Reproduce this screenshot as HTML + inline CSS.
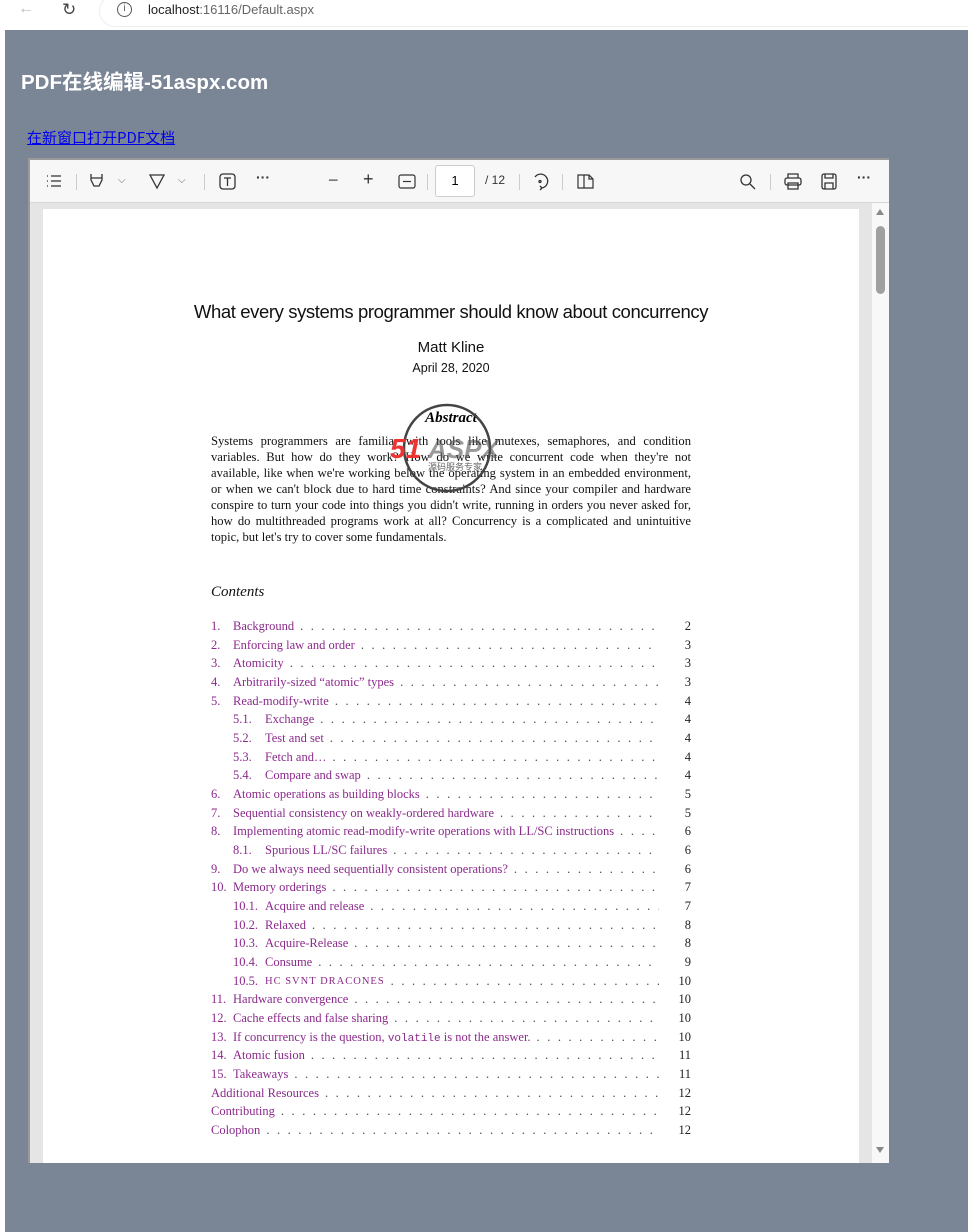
<!DOCTYPE html>
<html><head><meta charset="utf-8"><style>
*{margin:0;padding:0;box-sizing:border-box}
body{width:968px;height:1232px;background:#fff;position:relative;overflow:hidden;font-family:"Liberation Sans","Noto Sans CJK SC",sans-serif}
.top{position:absolute;left:0;top:0;width:968px;height:30px;background:#fff}
.url{position:absolute;left:100px;top:-4px;width:880px;height:30px;background:#fff;border-radius:15px;box-shadow:0 0 0 1px #eee}
.main{position:absolute;left:5px;top:30px;width:963px;height:1202px;background:#7a8596}
h1{position:absolute;left:21px;top:65px;color:#fff;font-size:20.5px;font-weight:bold;font-family:"Liberation Sans","Noto Sans CJK SC",sans-serif}
a.lk{position:absolute;left:27px;top:127px;color:#00e;font-size:15px;text-decoration:underline;font-family:"Noto Sans CJK SC",sans-serif}
.viewer{position:absolute;left:28px;top:158px;width:861px;height:1005px;background:#e5e5e5;border:2px solid #9a9a9a;border-bottom:none;border-right:none;overflow:hidden}
.tb{position:absolute;left:0;top:0;width:859px;height:43px;background:#f7f7f7;border-bottom:1px solid #d6d6d6}
.page{position:absolute;left:13px;top:49px;width:816px;height:960px;background:#fff}
.sb{position:absolute;left:842px;top:43px;width:17px;height:960px;background:#f8f8f8}
.ic{position:absolute;top:12px;color:#333;font-size:14px}
.sep{position:absolute;top:14px;width:1px;height:16px;background:#ccc}
.serif{font-family:"Liberation Serif",serif}
.toc{position:absolute;left:211px;width:480px;height:19px;display:flex;color:#8b2a8b;font-family:"Liberation Serif",serif;font-size:12.5px;white-space:nowrap}
.toc .d{flex:1;overflow:hidden;color:#444;letter-spacing:2.2px;padding-left:6px}
.toc .p{width:32px;text-align:right;color:#222}
</style></head><body>
<div class="top">
<span style="position:absolute;left:18px;top:0;color:#bbb;font-size:16px">←</span>
<span style="position:absolute;left:62px;top:0;color:#444;font-size:17px">↻</span>
<div class="url"></div>
<span style="position:absolute;left:117px;top:2px;width:15px;height:15px;border:1.5px solid #555;border-radius:50%;font-size:10px;text-align:center;line-height:12px;color:#555">i</span>
<span style="position:absolute;left:148px;top:2px;font-size:13px;color:#222">localhost<span style="color:#666">:16116/Default.aspx</span></span>
</div>
<div class="main"></div>
<h1>PDF在线编辑-51aspx.com</h1>
<a class="lk">在新窗口打开PDF文档</a>
<div class="viewer">
<div class="tb">
<svg class="ic" style="left:15px;top:13px" width="18" height="16" viewBox="0 0 18 16" fill="none" stroke="#333" stroke-width="1.2"><path d="M2 3h1M6 3h10M2 8h1M6 8h10M2 13h1M6 13h10"/></svg>
<div class="sep" style="left:46px"></div>
<svg style="position:absolute;left:58px;top:12px" width="18" height="18" viewBox="0 0 18 18" fill="none" stroke="#333" stroke-width="1.3"><path d="M3 2v6l3 6h5l3-6V2M3 6h11"/></svg>
<span class="ic" style="left:88px;font-size:10px;top:15px;color:#666">⌵</span>
<svg style="position:absolute;left:118px;top:12px" width="18" height="18" viewBox="0 0 18 18" fill="none" stroke="#333" stroke-width="1.3"><path d="M2 3h14L9 16z"/></svg>
<span class="ic" style="left:148px;font-size:10px;top:15px;color:#666">⌵</span>
<div class="sep" style="left:174px"></div>
<svg style="position:absolute;left:189px;top:13px" width="17" height="17" viewBox="0 0 17 17" fill="none" stroke="#333" stroke-width="1.3"><rect x="1" y="1" width="15" height="15" rx="3"/><path d="M5 5h7M8.5 5v8"/></svg>
<span class="ic" style="left:226px;top:9px;font-weight:bold">···</span>
<span class="ic" style="left:298px;top:10px;font-size:18px;color:#555">−</span>
<span class="ic" style="left:333px;top:9px;font-size:18px;color:#333">+</span>
<svg style="position:absolute;left:368px;top:14px" width="18" height="15" viewBox="0 0 18 15" fill="none" stroke="#333" stroke-width="1.2"><rect x="1" y="1" width="16" height="13" rx="2"/><path d="M5 7.5h8"/></svg>
<div class="sep" style="left:397px"></div>
<div style="position:absolute;left:405px;top:5px;width:40px;height:32px;background:#fff;border:1px solid #ccc;border-radius:3px;font-size:13px;text-align:center;line-height:30px">1</div>
<span class="ic" style="left:455px;top:13px;font-size:12px">/ 12</span>
<div class="sep" style="left:489px"></div>
<svg style="position:absolute;left:501px;top:12px" width="18" height="19" viewBox="0 0 18 19" fill="none" stroke="#333" stroke-width="1.3"><path d="M4 5a7 7 0 1 1 7 11M11 16l-2-2M11 16l-2 2"/><circle cx="9" cy="9.5" r="1"/></svg>
<div class="sep" style="left:532px"></div>
<svg style="position:absolute;left:546px;top:14px" width="18" height="15" viewBox="0 0 18 15" fill="none" stroke="#333" stroke-width="1.2"><path d="M8 1H2v13h6M8 1h5l4 4v9H8zM13 1v4h4"/></svg>
<svg style="position:absolute;left:709px;top:13px" width="17" height="17" viewBox="0 0 17 17" fill="none" stroke="#333" stroke-width="1.3"><circle cx="7" cy="7" r="5"/><path d="M11 11l5 5"/></svg>
<div class="sep" style="left:740px"></div>
<svg style="position:absolute;left:754px;top:13px" width="18" height="17" viewBox="0 0 18 17" fill="none" stroke="#333" stroke-width="1.3"><rect x="1" y="5" width="16" height="7" rx="2"/><path d="M4 5V1h10v4M4 10h10v6H4z"/></svg>
<svg style="position:absolute;left:791px;top:13px" width="16" height="17" viewBox="0 0 16 17" fill="none" stroke="#333" stroke-width="1.3"><rect x="1" y="1" width="14" height="15" rx="2"/><path d="M4 1v4h8V1M4 16v-6h8v6"/></svg>
<span class="ic" style="left:827px;top:9px;font-weight:bold">···</span>
</div>
<div class="sb"><div style="position:absolute;left:4px;top:6px;width:0;height:0;border:4px solid transparent;border-bottom:6px solid #888;border-top:none"></div><div style="position:absolute;left:4px;top:23px;width:9px;height:68px;background:#a0a0a0;border-radius:5px"></div><div style="position:absolute;left:4px;top:944px;width:0;height:0;border:4px solid transparent;border-top:6px solid #888;border-bottom:none"></div></div>
<div class="page"></div>
</div>

<div style="position:absolute;left:43px;top:301px;width:816px;text-align:center;font-size:18.5px;color:#111;letter-spacing:-0.4px">What every systems programmer should know about concurrency</div>
<div style="position:absolute;left:43px;top:339px;width:816px;text-align:center;font-size:15px;color:#111">Matt Kline</div>
<div style="position:absolute;left:43px;top:361px;width:816px;text-align:center;font-size:12.5px;color:#111">April 28, 2020</div>
<div class="serif" style="position:absolute;left:0;top:410px;width:902px;text-align:center;font-size:15px;font-style:italic;font-weight:bold">Abstract</div>
<div class="serif" style="position:absolute;left:211px;top:433px;width:480px;font-size:12.6px;line-height:16px;text-align:justify;color:#111">Systems programmers are familiar with tools like mutexes, semaphores, and condition variables. But how do they work? How do we write concurrent code when they're not available, like when we're working below the operating system in an embedded environment, or when we can't block due to hard time constraints? And since your compiler and hardware conspire to turn your code into things you didn't write, running in orders you never asked for, how do multithreaded programs work at all? Concurrency is a complicated and unintuitive topic, but let's try to cover some fundamentals.</div>
<svg style="position:absolute;left:388px;top:402px" width="125" height="92" viewBox="0 0 125 92"><circle cx="59" cy="46" r="43" fill="none" stroke="#444" stroke-width="2.5"/><text x="2" y="56" font-family="Liberation Sans" font-weight="bold" font-size="28" font-style="italic" fill="#e33">51</text><text x="40" y="56" font-family="Liberation Sans" font-weight="bold" font-size="26" font-style="italic" fill="#555" fill-opacity=".6">ASPX</text><text x="40" y="68" font-size="9" fill="#666" font-family="Noto Sans CJK SC">源码服务专家</text></svg>
<div class="serif" style="position:absolute;left:211px;top:584px;font-size:15px;font-style:italic;color:#111">Contents</div>

<div class="toc" style="top:619px"><span style="width:22px">1.</span><span>Background</span><span class="d">. . . . . . . . . . . . . . . . . . . . . . . . . . . . . . . . . . . . . . . . . . . . . . . . . . . . . . .</span><span class="p">2</span></div>
<div class="toc" style="top:637.7px"><span style="width:22px">2.</span><span>Enforcing law and order</span><span class="d">. . . . . . . . . . . . . . . . . . . . . . . . . . . . . . . . . . . . . . . . . . . . . . . . .</span><span class="p">3</span></div>
<div class="toc" style="top:656.3px"><span style="width:22px">3.</span><span>Atomicity</span><span class="d">. . . . . . . . . . . . . . . . . . . . . . . . . . . . . . . . . . . . . . . . . . . . . . . . . . . . . . .</span><span class="p">3</span></div>
<div class="toc" style="top:675px"><span style="width:22px">4.</span><span>Arbitrarily-sized “atomic” types</span><span class="d">. . . . . . . . . . . . . . . . . . . . . . . . . . . . . . . . . . . . . . . . . .</span><span class="p">3</span></div>
<div class="toc" style="top:693.7px"><span style="width:22px">5.</span><span>Read-modify-write</span><span class="d">. . . . . . . . . . . . . . . . . . . . . . . . . . . . . . . . . . . . . . . . . . . . . . . . . . .</span><span class="p">4</span></div>
<div class="toc" style="top:712.3px"><span style="width:54px;padding-left:22px">5.1.</span><span>Exchange</span><span class="d">. . . . . . . . . . . . . . . . . . . . . . . . . . . . . . . . . . . . . . . . . . . . . . . . . . . . .</span><span class="p">4</span></div>
<div class="toc" style="top:731px"><span style="width:54px;padding-left:22px">5.2.</span><span>Test and set</span><span class="d">. . . . . . . . . . . . . . . . . . . . . . . . . . . . . . . . . . . . . . . . . . . . . . . . . . . . .</span><span class="p">4</span></div>
<div class="toc" style="top:749.7px"><span style="width:54px;padding-left:22px">5.3.</span><span>Fetch and…</span><span class="d">. . . . . . . . . . . . . . . . . . . . . . . . . . . . . . . . . . . . . . . . . . . . . . . . . . . . .</span><span class="p">4</span></div>
<div class="toc" style="top:768.3px"><span style="width:54px;padding-left:22px">5.4.</span><span>Compare and swap</span><span class="d">. . . . . . . . . . . . . . . . . . . . . . . . . . . . . . . . . . . . . . . . . . . . . . . . .</span><span class="p">4</span></div>
<div class="toc" style="top:787px"><span style="width:22px">6.</span><span>Atomic operations as building blocks</span><span class="d">. . . . . . . . . . . . . . . . . . . . . . . . . . . . . . . . . . . . .</span><span class="p">5</span></div>
<div class="toc" style="top:805.7px"><span style="width:22px">7.</span><span>Sequential consistency on weakly-ordered hardware</span><span class="d">. . . . . . . . . . . . . . . . . . . . . . . . . .</span><span class="p">5</span></div>
<div class="toc" style="top:824.3px"><span style="width:22px">8.</span><span>Implementing atomic read-modify-write operations with LL/SC instructions</span><span class="d">. . . . . .</span><span class="p">6</span></div>
<div class="toc" style="top:843px"><span style="width:54px;padding-left:22px">8.1.</span><span>Spurious LL/SC failures</span><span class="d">. . . . . . . . . . . . . . . . . . . . . . . . . . . . . . . . . . . . . . . . . . .</span><span class="p">6</span></div>
<div class="toc" style="top:861.7px"><span style="width:22px">9.</span><span>Do we always need sequentially consistent operations?</span><span class="d">. . . . . . . . . . . . . . . . . . . . . .</span><span class="p">6</span></div>
<div class="toc" style="top:880.3px"><span style="width:22px">10.</span><span>Memory orderings</span><span class="d">. . . . . . . . . . . . . . . . . . . . . . . . . . . . . . . . . . . . . . . . . . . . . . . . . . .</span><span class="p">7</span></div>
<div class="toc" style="top:899px"><span style="width:54px;padding-left:22px">10.1.</span><span>Acquire and release</span><span class="d">. . . . . . . . . . . . . . . . . . . . . . . . . . . . . . . . . . . . . . . . . . . . . . .</span><span class="p">7</span></div>
<div class="toc" style="top:917.7px"><span style="width:54px;padding-left:22px">10.2.</span><span>Relaxed</span><span class="d">. . . . . . . . . . . . . . . . . . . . . . . . . . . . . . . . . . . . . . . . . . . . . . . . . . . . . .</span><span class="p">8</span></div>
<div class="toc" style="top:936.3px"><span style="width:54px;padding-left:22px">10.3.</span><span>Acquire-Release</span><span class="d">. . . . . . . . . . . . . . . . . . . . . . . . . . . . . . . . . . . . . . . . . . . . . . . . . .</span><span class="p">8</span></div>
<div class="toc" style="top:955px"><span style="width:54px;padding-left:22px">10.4.</span><span>Consume</span><span class="d">. . . . . . . . . . . . . . . . . . . . . . . . . . . . . . . . . . . . . . . . . . . . . . . . . . . . . .</span><span class="p">9</span></div>
<div class="toc" style="top:973.7px"><span style="width:54px;padding-left:22px">10.5.</span><span style="font-size:10.5px;letter-spacing:1px;padding-top:2px">HC SVNT DRACONES</span><span class="d">. . . . . . . . . . . . . . . . . . . . . . . . . . . . . . . . . . . . . . . . . . . . . .</span><span class="p">10</span></div>
<div class="toc" style="top:992.3px"><span style="width:22px">11.</span><span>Hardware convergence</span><span class="d">. . . . . . . . . . . . . . . . . . . . . . . . . . . . . . . . . . . . . . . . . . . . . . .</span><span class="p">10</span></div>
<div class="toc" style="top:1011px"><span style="width:22px">12.</span><span>Cache effects and false sharing</span><span class="d">. . . . . . . . . . . . . . . . . . . . . . . . . . . . . . . . . . . . . . . .</span><span class="p">10</span></div>
<div class="toc" style="top:1029.7px"><span style="width:22px">13.</span><span>If concurrency is the question, <span style="font-family:'Liberation Mono',monospace;font-size:11px">volatile</span> is not the answer.</span><span class="d">. . . . . . . . . . . . . . . . . . . . .</span><span class="p">10</span></div>
<div class="toc" style="top:1048.3px"><span style="width:22px">14.</span><span>Atomic fusion</span><span class="d">. . . . . . . . . . . . . . . . . . . . . . . . . . . . . . . . . . . . . . . . . . . . . . . . . . . . .</span><span class="p">11</span></div>
<div class="toc" style="top:1067px"><span style="width:22px">15.</span><span>Takeaways</span><span class="d">. . . . . . . . . . . . . . . . . . . . . . . . . . . . . . . . . . . . . . . . . . . . . . . . . . . . . . .</span><span class="p">11</span></div>
<div class="toc" style="top:1085.7px"><span>Additional Resources</span><span class="d">. . . . . . . . . . . . . . . . . . . . . . . . . . . . . . . . . . . . . . . . . . . . . . . . . . .</span><span class="p">12</span></div>
<div class="toc" style="top:1104.3px"><span>Contributing</span><span class="d">. . . . . . . . . . . . . . . . . . . . . . . . . . . . . . . . . . . . . . . . . . . . . . . . . . . . . . . .</span><span class="p">12</span></div>
<div class="toc" style="top:1123px"><span>Colophon</span><span class="d">. . . . . . . . . . . . . . . . . . . . . . . . . . . . . . . . . . . . . . . . . . . . . . . . . . . . . . . . .</span><span class="p">12</span></div>
</body></html>
